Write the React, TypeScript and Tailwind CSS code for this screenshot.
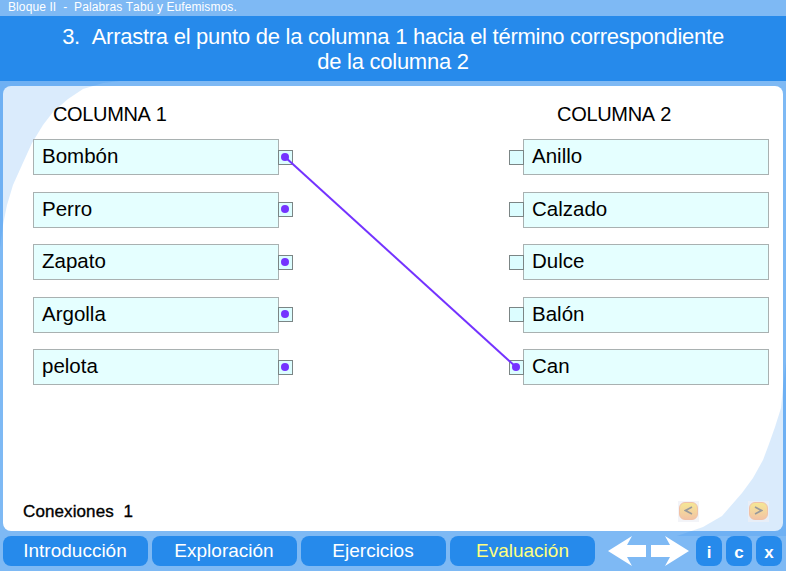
const leftTerms = ['Bombón', 'Perro', 'Zapato', 'Argolla', 'pelota'];
const rightTerms = ['Anillo', 'Calzado', 'Dulce', 'Balón', 'Can'];
const rowGaps = ['mt-0', 'mt-[17px]', 'mt-[16px]', 'mt-[17px]', 'mt-[16px]'];

function Socket({ filled, side, raised }: { filled: boolean; side: 'left' | 'right'; raised: boolean }) {
  return (
    <span
      className={`z-10 flex h-[15px] w-[15px] shrink-0 items-center justify-center border border-[#7b8585] bg-[#dcfdff] ${side === 'left' ? '-ml-px' : '-mr-px'} ${raised ? 'mt-[10px]' : 'mt-[11px]'}`}
    >
      {filled && <span className="-mt-px -ml-px h-2 w-2 rounded-full bg-[#7433ff]" />}
    </span>
  );
}

function Term({ text, raised }: { text: string; raised: boolean }) {
  return (
    <div
      className={`h-9 w-[246px] border border-[#a9b1b1] bg-[#e5ffff] pl-2 text-[20.5px] tracking-[0px] text-black ${raised ? 'leading-[31px]' : 'leading-[32px]'}`}
    >
      {text}
    </div>
  );
}

function PagerButton({ label }: { label: string }) {
  return (
    <button className="flex h-[21px] w-[21px] items-center justify-center bg-[#eeeff5]/70">
      <span className="flex h-[18px] w-[19px] items-center justify-center rounded-[6px] border border-[#f1c2a7] bg-linear-to-b from-[#f5e795] to-[#f3c4a4]">
        <svg width="9" height="9" viewBox="0 0 9 9" className="-mt-[2px]" fill="none" stroke="#999a9b" strokeWidth="1.7">
          <path d={label === '<' ? 'M8 1L1.5 4.500L8 8' : 'M1 1L7.500 4.500L1 8'} />
        </svg>
      </span>
    </button>
  );
}

function NavButton({ label, active = false }: { label: string; active?: boolean }) {
  return (
    <button
      className={`h-[30px] w-[145px] rounded-[8px] bg-[#268aeb] pb-px text-[19px] leading-[29px] ${active ? 'text-[#ffff80]' : 'pr-px text-white'}`}
    >
      {label}
    </button>
  );
}

function SmallButton({ label }: { label: string }) {
  return (
    <button className="h-[30px] w-[26px] rounded-[8px] bg-[#268aeb] pt-[3px] text-[17px] leading-[27px] font-bold text-white">
      {label}
    </button>
  );
}

export default function App() {
  return (
    <div className="relative flex h-[571px] w-[786px] flex-col overflow-hidden bg-[#7eb9f4] font-['Liberation_Sans',Arial,sans-serif] [font-kerning:none]">
      <div className="h-4 pl-2 text-[12px] leading-[14px] tracking-[0.1px] whitespace-pre text-white">
        {'Bloque II  -  Palabras Tabú y Eufemismos.'}
      </div>
      <h1 className="h-[65px] bg-[#268aeb] pt-[8px] text-center text-[22px] leading-[25px] tracking-[-0.26px] whitespace-pre text-white">
        {'3.  Arrastra el punto de la columna 1 hacia el término correspondiente\nde la columna 2'}
      </h1>

      <main className="relative mx-[3px] mt-[5px] flex h-[445px] flex-col rounded-[8px] bg-white">
        <svg className="pointer-events-none absolute -top-[5px] -left-[3px] z-0" width="786" height="455" viewBox="0 81 786 455">
          <g fill="#268aeb" fillOpacity=".17">
            <path d="M0 81H120L103 83L83 89L68 99L53 112L43 125L32 143L22 165L13 185L7 205L3 225L0 248Z" />
            <path d="M786 362V536H677L703 527L722 516L742 493L753 478L763 460L769 444L775 427L781 408L783 387Z" />
          </g>
        </svg>
        <div className="relative flex pt-[53px]">
          <section className="ml-[30px] w-[260px]">
            <h2 className="-mt-[37px] mb-[13px] pl-5 text-[20px] leading-6 tracking-[-0.35px]">COLUMNA 1</h2>
            {leftTerms.map((t, i) => (
              <div key={t} className={`flex ${rowGaps[i]}`}>
                <Term text={t} raised={i % 2 === 1} />
                <Socket filled side="left" raised={i % 2 === 1} />
              </div>
            ))}
          </section>
          <section className="ml-[216px] w-[260px]">
            <h2 className="-mt-[37px] mb-[13px] pl-12 text-[20px] leading-6 tracking-[-0.3px]">COLUMNA 2</h2>
            {rightTerms.map((t, i) => (
              <div key={t} className={`flex ${rowGaps[i]}`}>
                <Socket filled={t === 'Can'} side="right" raised={i % 2 === 1} />
                <Term text={t} raised={i % 2 === 1} />
              </div>
            ))}
          </section>
          <svg className="pointer-events-none absolute top-0 left-0 z-20" width="780" height="320">
            <path d="M282 71L513 281" stroke="#7433ff" strokeWidth="2" />
          </svg>
        </div>
        <footer className="relative mt-auto mb-[9px] flex items-center pl-5">
          <span className="w-[655px] pt-px text-[17px] leading-[21px] tracking-[0.1px] whitespace-pre [-webkit-text-stroke:0.35px_black]">{'Conexiones  1'}</span>
          <PagerButton label="<" />
          <span className="w-[49px]" />
          <PagerButton label=">" />
        </footer>
      </main>

      <nav className="relative mt-[5px] flex pl-[3px]">
        <div className="flex gap-1">
          <NavButton label="Introducción" />
          <NavButton label="Exploración" />
          <NavButton label="Ejercicios" />
          <NavButton label="Evaluación" active />
        </div>
        <svg className="ml-[13px]" width="82" height="30" viewBox="0 0 82 30" fill="white">
          <path d="M0 15L24 0L19 9H38V21H19L24 30Z" />
          <path d="M81 15L57 0L62 9H43V21H62L57 30Z" />
        </svg>
        <div className="ml-[6px] flex gap-1">
          <SmallButton label="i" />
          <SmallButton label="c" />
          <SmallButton label="x" />
        </div>
      </nav>
    </div>
  );
}
